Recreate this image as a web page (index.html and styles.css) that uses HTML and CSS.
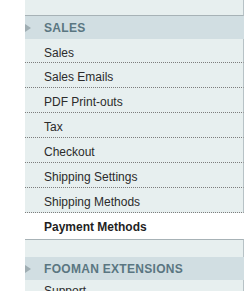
FILE: index.html
```html
<!DOCTYPE html>
<html lang="en">
<head>
    <meta charset="UTF-8">
    <meta name="viewport" content="width=device-width, initial-scale=1.0">
    <link rel="stylesheet" href="styles.css">
    <title>Configuration</title>
</head>
<body>

<div class="side-nav">
    <div class="nav-tail"></div>

    <div class="nav-group first">
        <div class="nav-title"><span class="arrow"></span>Sales</div>
        <ul class="nav-items">
            <li>Sales</li>
            <li>Sales Emails</li>
            <li>PDF Print-outs</li>
            <li>Tax</li>
            <li>Checkout</li>
            <li>Shipping Settings</li>
            <li>Shipping Methods</li>
            <li class="active">Payment Methods</li>
        </ul>
    </div>

    <div class="nav-group">
        <div class="nav-spacer"></div>
        <div class="nav-title"><span class="arrow"></span>Fooman Extensions</div>
        <ul class="nav-items">
            <li>Support</li>
        </ul>
    </div>
</div>

</body>
</html>
```

FILE: styles.css
```css
body {
    font-family: "Liberation Sans", Arial, sans-serif;
    font-size: 12px;
    margin: 0;
    background-color: #ffffff;
    color: #2b2b2b;
}

.side-nav {
    margin-left: 25px;
    width: 219px;
}

.nav-tail {
    height: 15px;
    background-color: #e7efef;
    border-right: 1px solid #b7c2c6;
    border-bottom: 1px solid #a7b2b6;
}

.nav-spacer {
    height: 17px;
    background-color: #e7efef;
    border-top: 1px solid #a7b2b6;
    border-right: 1px solid #b7c2c6;
}

.nav-title {
    display: flex;
    align-items: center;
    height: 22px;
    padding-top: 1px;
    padding-left: 19px;
    background-color: #d1dee2;
    color: #5a7681;
    font-weight: bold;
    text-transform: uppercase;
    letter-spacing: 0.3px;
    position: relative;
}

.arrow {
    position: absolute;
    left: 0;
    top: 8px;
    width: 0;
    height: 0;
    border-top: 4px solid transparent;
    border-bottom: 4px solid transparent;
    border-left: 6px solid #9fadb2;
}

.nav-items {
    list-style: none;
    margin: 0;
    padding: 0;
}

.nav-items li {
    height: 22px;
    padding-top: 2px;
    line-height: 24px;
    padding-left: 19px;
    background-color: #e7efef;
    border-right: 1px solid #b7c2c6;
    border-bottom: 1px dotted #7d7d7d;
}

.first .nav-items li:first-child {
    height: 21px;
}

.nav-group + .nav-group .nav-items li {
    padding-top: 0;
    height: 24px;
    line-height: 22px;
}

.nav-items li.active {
    height: 25px;
    padding-top: 1px;
    line-height: 26px;
    background-color: #ffffff;
    border-right: none;
    border-bottom: none;
    font-weight: bold;
    color: #1f1f1f;
}
```
